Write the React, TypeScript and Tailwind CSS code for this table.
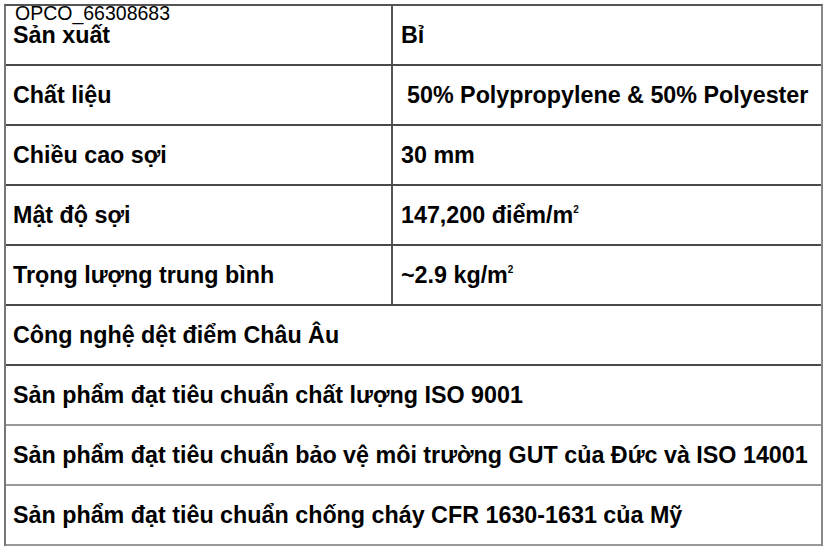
import React from "react"

const pairs: [string, React.ReactNode][] = [
  ["Sản xuất", "Bỉ"],
  ["Chất liệu", <span className="pl-[6px]">50% Polypropylene &amp; 50% Polyester</span>],
  ["Chiều cao sợi", "30 mm"],
  ["Mật độ sợi", <>147,200 điểm/m<sup className="text-[10px] align-[10px]">2</sup></>],
  ["Trọng lượng trung bình", <>~2.9 kg/m<sup className="text-[10px] align-[10px]">2</sup></>],
]

const singles = [
  "Công nghệ dệt điểm Châu Âu",
  "Sản phẩm đạt tiêu chuẩn chất lượng ISO 9001",
  "Sản phẩm đạt tiêu chuẩn bảo vệ môi trường GUT của Đức và ISO 14001",
  "Sản phẩm đạt tiêu chuẩn chống cháy CFR 1630-1631 của Mỹ",
]

export default function App() {
  return (
    <div className="relative w-[827px] h-[551px] bg-white overflow-hidden text-black" style={{ fontFamily: '"Liberation Sans", Arial, sans-serif' }}>
      {/* tag sitting over the table's top edge */}
      <div className="absolute left-[15px] top-[2px] text-[19.5px] leading-[22px] z-10">OPCO_66308683</div>

      <div className="ml-[4px] mt-[4px] w-[819px] border-l-2 border-r-2 border-t-2 border-l-[#777] border-r-[#888] border-t-[#555]">
        {pairs.map(([label, value], i) => (
          <div key={i} className="flex h-[60px] border-b-2 border-[#4a4a4a] text-[23.3px] font-bold">
            <div className="w-[387px] shrink-0 flex items-center pl-[7px] border-r-2 border-[#555]">{label}</div>
            <div className="flex-1 flex items-center pl-[8px] whitespace-nowrap">{value}</div>
          </div>
        ))}
        {singles.map((text, i) => (
          <div key={i} className={`flex items-center h-[60px] border-b-2 pl-[7px] text-[23.3px] font-bold whitespace-nowrap ${i < 1 ? "border-[#4a4a4a]" : "border-[#999]"}`}>
            {text}
          </div>
        ))}
      </div>
    </div>
  )
}
